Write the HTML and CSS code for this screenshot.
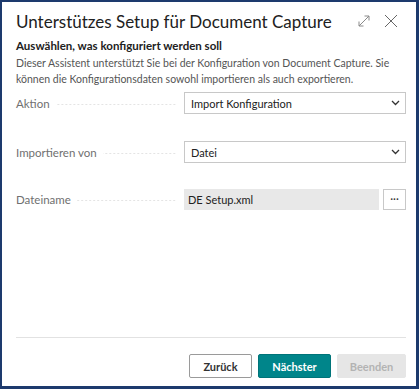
FILE: index.html
```html
<!DOCTYPE html>
<html lang="de">
<head>
    <meta charset="UTF-8">
    <title>Unterstützes Setup</title>
    <link rel="stylesheet" href="styles.css">
</head>
<body>
    <div class="dialog">
        <div class="dialog-header">
            <h1 class="dialog-title">Unterstützes Setup für Document Capture</h1>
            <div class="header-icons">
                <svg class="icon-expand" width="12" height="12" viewBox="0 0 12 12">
                    <path d="M1 11 L11 1 M6.5 1 H11 V5.5 M1 6.5 V11 H5.5" fill="none" stroke="#8a8a8a" stroke-width="1"/>
                </svg>
                <svg class="icon-close" width="14" height="14" viewBox="0 0 14 14">
                    <path d="M1 1 L13 13 M13 1 L1 13" fill="none" stroke="#666" stroke-width="1"/>
                </svg>
            </div>
        </div>

        <div class="dialog-body">
            <div class="section-title">Auswählen, was konfiguriert werden soll</div>
            <p class="section-desc">Dieser Assistent unterstützt Sie bei der Konfiguration von Document Capture. Sie können die Konfigurationsdaten sowohl importieren als auch exportieren.</p>

            <div class="field-row row-first">
                <span class="field-label">Aktion</span>
                <span class="leader"></span>
                <div class="field-select">
                    <span>Import Konfiguration</span>
                    <svg width="9" height="6" viewBox="0 0 9 6"><path d="M1 1 L4.5 4.5 L8 1" fill="none" stroke="#333" stroke-width="1.3"/></svg>
                </div>
            </div>

            <div class="field-row">
                <span class="field-label">Importieren von</span>
                <span class="leader"></span>
                <div class="field-select">
                    <span>Datei</span>
                    <svg width="9" height="6" viewBox="0 0 9 6"><path d="M1 1 L4.5 4.5 L8 1" fill="none" stroke="#333" stroke-width="1.3"/></svg>
                </div>
            </div>

            <div class="field-row row-file">
                <span class="field-label">Dateiname</span>
                <span class="leader"></span>
                <div class="field-file">
                    <div class="file-input">DE Setup.xml</div>
                    <div class="file-btn">···</div>
                </div>
            </div>
        </div>

        <div class="dialog-footer">
            <button class="btn btn-default">Zurück</button>
            <button class="btn btn-primary">Nächster</button>
            <button class="btn btn-disabled">Beenden</button>
        </div>
    </div>
</body>
</html>
```

FILE: styles.css
```css
* {
    box-sizing: border-box;
}

html, body {
    margin: 0;
    height: 100%;
}

body {
    font-family: 'Segoe UI', Lato, 'Open Sans', sans-serif;
    color: #212121;
    background: #ffffff;
}

.dialog {
    height: 100vh;
    display: flex;
    flex-direction: column;
    border: 2px solid #1d3a6d;
    border-right-width: 3px;
    border-bottom-width: 3px;
    padding: 0 10px 0 14px;
}

.dialog-header {
    display: flex;
    align-items: center;
    justify-content: space-between;
    height: 36px;
    padding-top: 2px;
}

.dialog-title {
    margin: 0;
    font-size: 17px;
    font-weight: 400;
    color: #212121;
}

.header-icons {
    display: flex;
    align-items: center;
    gap: 14px;
    padding-right: 8px;
}

.dialog-body {
    flex: 1;
}

.section-title {
    margin-top: 0;
    font-size: 11.5px;
    font-weight: 700;
    color: #212121;
    line-height: 16px;
}

.section-desc {
    margin: 1px 0 0;
    font-size: 10.5px;
    line-height: 16px;
    color: #555555;
}

.field-row {
    display: flex;
    align-items: center;
    height: 22px;
    margin-top: 27px;
}

.row-first {
    margin-top: 5px;
}

.row-file {
    margin-top: 25px;
}

.field-label {
    font-size: 11.5px;
    color: #707070;
    white-space: nowrap;
}

.leader {
    flex: 1;
    height: 1px;
    margin: 3px 8px 0 6px;
    background-image: radial-gradient(circle, #c4c4c4 0.6px, transparent 0.8px);
    background-size: 4px 2px;
    background-repeat: repeat-x;
    background-position: right center;
}

.field-select {
    width: 222px;
    height: 22px;
    border: 1px solid #c8c8c8;
    display: flex;
    align-items: center;
    justify-content: space-between;
    padding: 0 5px 0 6px;
    font-size: 11px;
    color: #212121;
}

.field-file {
    width: 222px;
    display: flex;
    gap: 4px;
}

.file-input {
    flex: 1;
    height: 21px;
    background: #e8e8e8;
    font-size: 11px;
    line-height: 21px;
    padding-left: 4px;
}

.file-btn {
    width: 23px;
    height: 21px;
    border: 1px solid #c8c8c8;
    font-size: 11px;
    line-height: 18px;
    text-align: center;
    color: #333;
}

.dialog-footer {
    display: flex;
    justify-content: flex-end;
    gap: 6px;
    border-top: 1px solid #e2e2e2;
    margin-bottom: 8px;
    padding-top: 16px;
}

.btn {
    height: 24px;
    font-family: Lato, 'Segoe UI', sans-serif;
    font-size: 11px;
    font-weight: 700;
    border-radius: 2px;
    padding: 0;
}

.btn-default {
    width: 63px;
    background: #ffffff;
    border: 1px solid #9a9a9a;
    color: #333333;
}

.btn-primary {
    width: 73px;
    background: #00858a;
    border: 1px solid #007479;
    color: #ffffff;
}

.btn-disabled {
    width: 69px;
    background: #e6e6e6;
    border: 1px solid #e6e6e6;
    color: #b3b3b3;
}
```
